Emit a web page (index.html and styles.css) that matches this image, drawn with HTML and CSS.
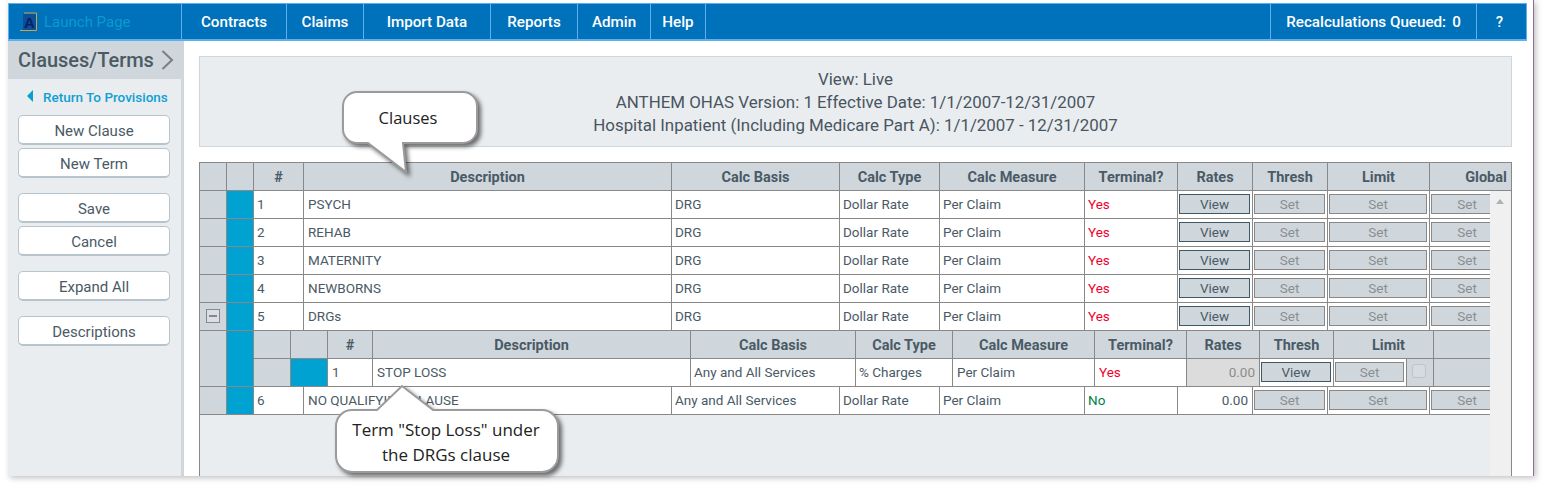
FILE: index.html
```html
<!DOCTYPE html>
<html lang="en">
<head>
    <meta charset="UTF-8">
    <title>Clauses/Terms</title>
    <link rel="stylesheet" href="styles.css">
</head>
<body>
<div class="frame">

    <!-- Top menu -->
    <nav class="topnav">
        <a class="brand">
            <svg class="logo" width="18" height="20" viewBox="0 0 18 20">
                <rect x="3" y="2" width="13" height="16" fill="#0b4f94"/>
                <path d="M4 1H16.500V18.500H0" fill="none" stroke="#c9a34e" stroke-width="1"/>
                <text x="9.500" y="16" class="logo-letter">A</text>
            </svg>
            <span>Launch Page</span>
        </a>
        <a class="nav-item w-contracts">Contracts</a>
        <a class="nav-item w-claims">Claims</a>
        <a class="nav-item w-import">Import Data</a>
        <a class="nav-item w-reports">Reports</a>
        <a class="nav-item w-admin">Admin</a>
        <a class="nav-item w-help">Help</a>
        <div class="nav-right">
            <a class="nav-item w-recalc">Recalculations Queued:<span class="queue-count">0</span></a>
            <a class="nav-item w-question">?</a>
        </div>
    </nav>

    <div class="page">

        <!-- Left menu -->
        <aside class="sidebar">
            <div class="side-title">
                <span>Clauses/Terms</span>
                <svg width="13" height="20" viewBox="0 0 13 20"><path d="M1.500 1L11 10L1.500 19" fill="none" stroke="#7b7f82" stroke-width="2"/></svg>
            </div>
            <a class="return-link"><i class="return-arrow"></i>Return To Provisions</a>
            <div class="side-group">
                <button class="side-btn">New Clause</button>
                <button class="side-btn">New Term</button>
            </div>
            <div class="side-group">
                <button class="side-btn">Save</button>
                <button class="side-btn">Cancel</button>
            </div>
            <div class="side-group">
                <button class="side-btn">Expand All</button>
            </div>
            <div class="side-group">
                <button class="side-btn">Descriptions</button>
            </div>
        </aside>

        <main class="main">
            <div class="info-panel">
                <div>View: Live</div>
                <div>ANTHEM OHAS Version: 1 Effective Date: 1/1/2007-12/31/2007</div>
                <div>Hospital Inpatient (Including Medicare Part A): 1/1/2007 - 12/31/2007</div>
            </div>

            <div class="grid">
                <!-- Grid header -->
                <table class="tbl tbl-head">
                    <colgroup>
                        <col class="c27"><col class="c27"><col class="c50"><col class="c368"><col class="c168"><col class="c100"><col class="c145"><col class="c93"><col class="c75"><col class="c75"><col class="c102"><col class="c112">
                    </colgroup>
                    <tr>
                        <th></th><th></th><th>#</th><th>Description</th><th>Calc Basis</th><th>Calc Type</th><th>Calc Measure</th><th>Terminal?</th><th>Rates</th><th>Thresh</th><th>Limit</th><th class="no-right">Global</th>
                    </tr>
                </table>

                <div class="grid-body">
                    <div class="rows">
                        <table class="tbl">
                            <colgroup>
                                <col class="c27"><col class="c27"><col class="c50"><col class="c368"><col class="c168"><col class="c100"><col class="c145"><col class="c93"><col class="c75"><col class="c75"><col class="c102"><col class="c76">
                            </colgroup>
                            <tr>
                                <td class="gray"></td><td class="teal"></td><td>1</td><td>PSYCH</td><td>DRG</td><td>Dollar Rate</td><td>Per Claim</td><td class="yes">Yes</td>
                                <td class="bc"><button class="view">View</button></td><td class="bc"><button class="set">Set</button></td><td class="bc"><button class="set">Set</button></td><td class="bc"><button class="set">Set</button></td>
                            </tr>
                            <tr>
                                <td class="gray"></td><td class="teal"></td><td>2</td><td>REHAB</td><td>DRG</td><td>Dollar Rate</td><td>Per Claim</td><td class="yes">Yes</td>
                                <td class="bc"><button class="view">View</button></td><td class="bc"><button class="set">Set</button></td><td class="bc"><button class="set">Set</button></td><td class="bc"><button class="set">Set</button></td>
                            </tr>
                            <tr>
                                <td class="gray"></td><td class="teal"></td><td>3</td><td>MATERNITY</td><td>DRG</td><td>Dollar Rate</td><td>Per Claim</td><td class="yes">Yes</td>
                                <td class="bc"><button class="view">View</button></td><td class="bc"><button class="set">Set</button></td><td class="bc"><button class="set">Set</button></td><td class="bc"><button class="set">Set</button></td>
                            </tr>
                            <tr>
                                <td class="gray"></td><td class="teal"></td><td>4</td><td>NEWBORNS</td><td>DRG</td><td>Dollar Rate</td><td>Per Claim</td><td class="yes">Yes</td>
                                <td class="bc"><button class="view">View</button></td><td class="bc"><button class="set">Set</button></td><td class="bc"><button class="set">Set</button></td><td class="bc"><button class="set">Set</button></td>
                            </tr>
                            <tr>
                                <td class="gray toggle-cell"><span class="toggle"><i></i></span></td><td class="teal"></td><td>5</td><td>DRGs</td><td>DRG</td><td>Dollar Rate</td><td>Per Claim</td><td class="yes">Yes</td>
                                <td class="bc"><button class="view">View</button></td><td class="bc"><button class="set">Set</button></td><td class="bc"><button class="set">Set</button></td><td class="bc"><button class="set">Set</button></td>
                            </tr>
                            <!-- Terms under the DRGs clause -->
                            <tr class="tall">
                                <td class="gray"></td><td class="teal"></td>
                                <td colspan="10" class="nested-cell">
                                    <table class="tbl tbl-nested">
                                        <colgroup>
                                            <col class="c37"><col class="c37"><col class="c45"><col class="c318"><col class="c165"><col class="c97"><col class="c142"><col class="c92"><col class="c73"><col class="c74"><col class="c73"><col class="c27"><col class="c60">
                                        </colgroup>
                                        <tr>
                                            <th></th><th></th><th>#</th><th>Description</th><th>Calc Basis</th><th>Calc Type</th><th>Calc Measure</th><th>Terminal?</th><th>Rates</th><th>Thresh</th><th colspan="2" class="limit-head">Limit</th><th class="no-right"></th>
                                        </tr>
                                        <tr class="last">
                                            <td class="gray"></td><td class="teal"></td><td class="pad">1</td><td class="pad">STOP LOSS</td><td>Any and All Services</td><td>% Charges</td><td class="pad">Per Claim</td><td class="yes pad">Yes</td>
                                            <td class="amount disabled">0.00</td><td class="bc"><button class="view">View</button></td><td class="bc"><button class="set">Set</button></td>
                                            <td class="gray check-cell"><span class="check"></span></td><td class="gray no-right"></td>
                                        </tr>
                                    </table>
                                </td>
                            </tr>
                            <tr>
                                <td class="gray"></td><td class="teal"></td><td>6</td><td>NO QUALIFYING CLAUSE</td><td>Any and All Services</td><td>Dollar Rate</td><td>Per Claim</td><td class="no">No</td>
                                <td class="amount">0.00</td><td class="bc"><button class="set">Set</button></td><td class="bc"><button class="set">Set</button></td><td class="bc"><button class="set">Set</button></td>
                            </tr>
                        </table>
                    </div>
                    <div class="scrollbar"><i class="scroll-up"></i></div>
                </div>
            </div>
        </main>
    </div>

    <!-- Callouts drawn over the screen -->
    <div class="callout callout-clauses">
        <svg width="146" height="92" viewBox="0 0 146 92">
            <path d="M18 2H124A14 14 0 0 1 138 16V39A14 14 0 0 1 124 53H64L67 82L29 53H18A14 14 0 0 1 4 39V16A14 14 0 0 1 18 2Z" fill="#fff" stroke="#9b9b9b" stroke-width="2"/>
        </svg>
        <span class="callout-text">Clauses</span>
    </div>
    <div class="callout callout-term">
        <svg width="236" height="96" viewBox="0 0 236 96">
            <path d="M21 26H46L71 2L102 26H211A16 16 0 0 1 227 42V72A16 16 0 0 1 211 88H21A16 16 0 0 1 5 72V42A16 16 0 0 1 21 26Z" fill="#fff" stroke="#9b9b9b" stroke-width="2"/>
        </svg>
        <span class="callout-text">Term "Stop Loss" under<br>the DRGs clause</span>
    </div>
</div>
</body>
</html>
```

FILE: styles.css
```css
* {
    box-sizing: border-box;
}

html, body {
    margin: 0;
    padding: 0;
    height: 486px;
    overflow: hidden;
    background: #fff;
}

body {
    font-family: Roboto, 'Liberation Sans', sans-serif;
    color: #4a5a66;
}

.frame {
    position: relative;
    width: 1526px;
    height: 476px;
    margin-left: 8px;
    padding-top: 3px;
    display: flex;
    flex-direction: column;
    background: #fff;
    border-right: 1px solid #8c6d97;
    box-shadow: 2px 2px 6px rgba(0, 0, 0, 0.25);
}

/* Top menu */
.topnav {
    flex: none;
    width: 1519px;
    height: 38px;
    display: flex;
    background: #0071bb;
    border: 1px solid #5fb0ec;
    border-bottom-width: 2px;
    color: #fff;
}

.brand {
    width: 173px;
    display: flex;
    align-items: center;
    padding-left: 11px;
    font-size: 15px;
    color: #0b9ad0;
    border-right: 1px solid #5fb0ec;
}

.logo {
    margin-right: 6px;
}

.logo-letter {
    font-family: 'Liberation Sans', sans-serif;
    font-size: 15px;
    font-weight: bold;
    fill: #0a1f6b;
    text-anchor: middle;
}

.nav-item {
    display: flex;
    align-items: center;
    justify-content: center;
    padding-top: 1px;
    font-size: 15.200px;
    font-weight: 500;
    border-right: 1px solid #5fb0ec;
}

.w-contracts { width: 105px; }
.w-claims { width: 77px; }
.w-import { width: 127px; }
.w-reports { width: 87px; }
.w-admin { width: 73px; }
.w-help { width: 55px; }

.nav-right {
    margin-left: auto;
    display: flex;
}

.nav-right .nav-item:first-child {
    border-left: 1px solid #5fb0ec;
}

.w-recalc { width: 207px; }
.w-question { width: 49px; padding-right: 4px; border-right: none; }

.queue-count {
    margin-left: 6px;
}

.page {
    flex: 1;
    display: flex;
    min-height: 0;
}

/* Left menu */
.sidebar {
    flex: none;
    width: 176px;
    background: #e9edf0;
    border-right: 3px solid #cfd7dc;
}

.side-title {
    height: 38px;
    display: flex;
    align-items: center;
    padding-left: 10px;
    background: #cfd7dc;
    font-size: 20px;
    font-weight: 500;
    color: #4c5a63;
}

.side-title svg {
    margin-left: 7px;
}

.return-link {
    display: flex;
    align-items: center;
    height: 36px;
    padding-left: 19px;
    font-size: 13.500px;
    font-weight: 500;
    color: #10a0d2;
}

.return-arrow {
    width: 0;
    height: 0;
    margin: -3px 10px 0 0;
    border-top: 6px solid transparent;
    border-bottom: 6px solid transparent;
    border-right: 6px solid #0a9fd0;
}

.side-group {
    display: flex;
    flex-direction: column;
    gap: 3px;
    margin: 0 11px 15px 10px;
}

.side-btn {
    height: 30px;
    padding: 3px 0 0;
    background: #fff;
    border: 1px solid #b8c4cb;
    border-bottom-width: 2px;
    border-radius: 5px;
    font-family: inherit;
    font-size: 15px;
    color: #4a5a66;
}

/* Main area */
.main {
    flex: 1;
    min-width: 0;
    padding: 15px 21px 0 15px;
    display: flex;
    flex-direction: column;
    gap: 15px;
}

.info-panel {
    flex: none;
    height: 91px;
    padding-top: 11px;
    background: #e9edf0;
    border: 1px solid #cfd7dc;
    text-align: center;
    font-size: 16.900px;
    line-height: 23px;
    color: #4a5560;
}

.grid {
    flex: 1;
    min-height: 0;
    display: flex;
    flex-direction: column;
    overflow: hidden;
    background: #e9edf0;
    border: 1px solid #888;
    border-bottom: none;
}

.grid-body {
    flex: 1;
    min-height: 0;
    display: flex;
}

.rows {
    flex: 1;
    min-width: 0;
    overflow: hidden;
}

.scrollbar {
    flex: none;
    width: 21px;
    padding: 8px 0 0 6px;
    background: #f0f0f0;
}

.scroll-up {
    display: block;
    width: 0;
    height: 0;
    border-left: 4.500px solid transparent;
    border-right: 4.500px solid transparent;
    border-bottom: 5px solid #aeb1b3;
}

/* Tables */
.tbl {
    table-layout: fixed;
    border-collapse: separate;
    border-spacing: 0;
    width: 1306px;
    font-size: 13.500px;
}

.tbl-head {
    flex: none;
    width: 1342px;
}

.tbl-nested {
    width: 1240px;
}

.c27 { width: 27px; }
.c37 { width: 37px; }
.c45 { width: 45px; }
.c50 { width: 50px; }
.c60 { width: 60px; }
.c73 { width: 73px; }
.c74 { width: 74px; }
.c75 { width: 75px; }
.c76 { width: 76px; }
.c92 { width: 92px; }
.c93 { width: 93px; }
.c97 { width: 97px; }
.c100 { width: 100px; }
.c102 { width: 102px; }
.c112 { width: 112px; }
.c142 { width: 142px; }
.c145 { width: 145px; }
.c165 { width: 165px; }
.c168 { width: 168px; }
.c318 { width: 318px; }
.c368 { width: 368px; }

.tbl th,
.tbl td {
    height: 28px;
    padding: 0 0 2px 3px;
    border-right: 1px solid #888;
    border-bottom: 1px solid #888;
    white-space: nowrap;
    overflow: hidden;
}

.tbl th {
    padding: 2px 0 0;
    background: #cfd7dc;
    text-align: center;
    font-size: 14.500px;
    font-weight: 700;
    color: #4a5a66;
}

.tbl td {
    background: #fff;
    color: #4a5a66;
}

.tbl td:nth-child(4) {
    padding-left: 4px;
}

.tbl th.limit-head {
    padding-left: 10px;
}

.tbl th.no-right,
.tbl td.no-right {
    border-right: none;
}

.tbl td.gray {
    background: #cfd7dc;
}

.tbl td.teal {
    background: #00a2d2;
}

.tbl td.pad {
    padding-left: 4px;
}

.tbl td.yes {
    color: #f0002d;
}

.tbl td.no {
    color: #00804a;
}

.tbl td.amount {
    padding: 0 4px 2px 0;
    text-align: right;
    font-size: 13.500px;
}

.tbl td.disabled {
    background: #dcdcdc;
    color: #8c8c8c;
}

.tbl td.bc {
    padding: 0 2px 2px 1px;
}

.tall > td {
    height: 56px;
}

.tbl td.nested-cell {
    padding: 0;
    border-right: none;
    vertical-align: top;
}

.tbl-nested tr.last td {
    height: 27px;
    border-bottom: none;
}

button.view,
button.set {
    display: block;
    width: 100%;
    height: 20px;
    padding: 0;
    background: #cfd7dc;
    border-style: solid;
    border-width: 1px;
    font-family: inherit;
    font-size: 13.500px;
}

button.view {
    border-color: #3d5866;
    color: #4a5a66;
}

button.set {
    border-color: #888;
    color: #8c8f92;
}

.tbl td.toggle-cell {
    padding: 0 0 2px 6px;
}

.toggle {
    display: flex;
    align-items: center;
    justify-content: center;
    width: 14px;
    height: 14px;
    border: 1px solid #888;
    background: #d9dfe3;
}

.toggle i {
    display: block;
    width: 8px;
    height: 2px;
    background: #888;
}

.tbl td.check-cell {
    padding: 0 0 0 5px;
    vertical-align: top;
}

.check {
    display: block;
    width: 14px;
    height: 14px;
    margin-top: 5px;
    background: #d5dbdf;
    border: 1px solid #bcc4c9;
    border-radius: 3px;
}

/* Callouts */
.callout {
    position: absolute;
}

.callout svg {
    display: block;
    overflow: visible;
    filter: drop-shadow(3px 3px 2px rgba(0, 0, 0, 0.55));
}

.callout-text {
    position: absolute;
    left: 0;
    text-align: center;
    font-family: 'Open Sans', 'Noto Sans', sans-serif;
    color: #222;
}

.callout-clauses {
    left: 331px;
    top: 90px;
}

.callout-clauses .callout-text {
    top: 18px;
    width: 138px;
    font-size: 16.500px;
    line-height: 20px;
}

.callout-term {
    left: 323px;
    top: 384px;
}

.callout-term .callout-text {
    top: 33px;
    width: 230px;
    font-size: 17px;
    line-height: 25px;
}
```
